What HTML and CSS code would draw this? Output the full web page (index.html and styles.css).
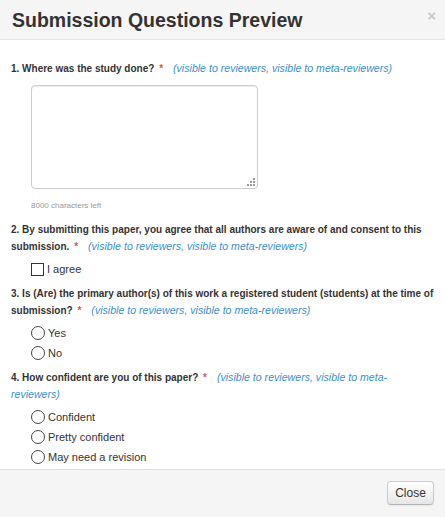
FILE: index.html
```html
<!DOCTYPE html>
<html lang="en">
<head>
    <meta charset="UTF-8">
    <meta name="viewport" content="width=device-width, initial-scale=1.0">
    <title>Submission Questions Preview</title>
    <link rel="stylesheet" href="styles.css">
</head>
<body>
    <div class="modal">
        <div class="modal-header">
            <h1>Submission Questions Preview</h1>
            <span class="close-x">&times;</span>
        </div>
        <div class="modal-body">
            <div class="question">
                <p class="q-text">1. Where was the study done? <span class="req">*</span><span class="vis">(visible to reviewers, visible to meta-reviewers)</span></p>
                <div class="answer-wrap">
                    <textarea class="answer"></textarea>
                    <span class="grip"></span>
                </div>
                <div class="chars-left">8000 characters left</div>
            </div>
            <div class="question">
                <p class="q-text">2. By submitting this paper, you agree that all authors are aware of and consent to this submission. <span class="req">*</span><span class="vis">(visible to reviewers, visible to meta-reviewers)</span></p>
                <label class="option"><span class="box"></span>I agree</label>
            </div>
            <div class="question">
                <p class="q-text">3. Is (Are) the primary author(s) of this work a registered student (students) at the time of submission? <span class="req">*</span><span class="vis">(visible to reviewers, visible to meta-reviewers)</span></p>
                <label class="option"><span class="radio"></span>Yes</label>
                <label class="option"><span class="radio"></span>No</label>
            </div>
            <div class="question">
                <p class="q-text">4. How confident are you of this paper? <span class="req">*</span><span class="vis">(visible to reviewers, visible to meta-reviewers)</span></p>
                <label class="option"><span class="radio"></span>Confident</label>
                <label class="option"><span class="radio"></span>Pretty confident</label>
                <label class="option"><span class="radio"></span>May need a revision</label>
            </div>
        </div>
        <div class="modal-footer">
            <button class="btn">Close</button>
        </div>
    </div>
</body>
</html>
```

FILE: styles.css
```css
html, body {
    margin: 0;
    height: 100%;
}
body {
    font-family: "Liberation Sans", Arial, sans-serif;
    color: #333;
    background-color: #fff;
}
.modal {
    display: flex;
    flex-direction: column;
    height: 517px;
}
.modal-header {
    display: flex;
    justify-content: space-between;
    align-items: flex-start;
    height: 39px;
    background-color: #f5f5f5;
    border-bottom: 1px solid #e3e3e3;
    padding: 0 9px 0 12px;
}
.modal-header h1 {
    margin: 0;
    font-size: 19.5px;
    line-height: 40px;
    font-weight: bold;
    color: #333;
}
.close-x {
    font-size: 15px;
    font-weight: bold;
    line-height: 32px;
    color: #c8c8c8;
}
.modal-body {
    flex: 1;
    overflow: hidden;
    padding: 20px 11px 0 11px;
}
.question {
    margin-bottom: 6px;
}
.q-text {
    margin: 0;
    font-size: 10px;
    font-weight: bold;
    line-height: 17px;
}
.req {
    margin-left: 2px;
    color: #d9534f;
}
.vis {
    margin-left: 10px;
    font-size: 10.6px;
    font-weight: normal;
    font-style: italic;
    color: #3a8fc7;
}
.answer-wrap {
    position: relative;
    width: 227px;
    height: 104px;
    margin: 8px 0 0 20px;
}
.answer {
    display: block;
    width: 100%;
    height: 100%;
    box-sizing: border-box;
    border: 1px solid #ccc;
    border-radius: 4px;
    box-shadow: inset 0 1px 1px rgba(0, 0, 0, 0.075);
    resize: none;
}
.grip {
    position: absolute;
    right: 3px;
    bottom: 3px;
    width: 8px;
    height: 8px;
    background:
        linear-gradient(#999, #999) 6px 0 / 2px 2px no-repeat,
        linear-gradient(#999, #999) 3px 3px / 2px 2px no-repeat,
        linear-gradient(#999, #999) 6px 3px / 2px 2px no-repeat,
        linear-gradient(#999, #999) 0 6px / 2px 2px no-repeat,
        linear-gradient(#999, #999) 3px 6px / 2px 2px no-repeat,
        linear-gradient(#999, #999) 6px 6px / 2px 2px no-repeat;
}
.chars-left {
    margin: 12px 0 10px 20px;
    font-size: 8px;
    line-height: 10px;
    color: #999;
}
.option {
    display: flex;
    align-items: center;
    height: 20px;
    margin-left: 20px;
    font-size: 11px;
    color: #333;
}
.question .q-text + .option {
    margin-top: 4px;
}
.box {
    width: 11px;
    height: 11px;
    border: 1px solid #333;
    margin-right: 3px;
}
.radio {
    width: 12px;
    height: 12px;
    border: 1px solid #444;
    border-radius: 50%;
    margin-right: 3px;
}
.modal-footer {
    display: flex;
    justify-content: flex-end;
    height: 48px;
    background-color: #f5f5f5;
    border-top: 1px solid #ddd;
    padding: 11px 11px 0 0;
    box-sizing: border-box;
}
.btn {
    width: 47px;
    height: 24px;
    font-family: "Liberation Sans", Arial, sans-serif;
    font-size: 12px;
    color: #333;
    background: linear-gradient(#fff, #e6e6e6);
    border: 1px solid #ccc;
    border-bottom-color: #b3b3b3;
    border-radius: 4px;
    box-shadow: 0 1px 2px rgba(0, 0, 0, 0.05);
}
```
